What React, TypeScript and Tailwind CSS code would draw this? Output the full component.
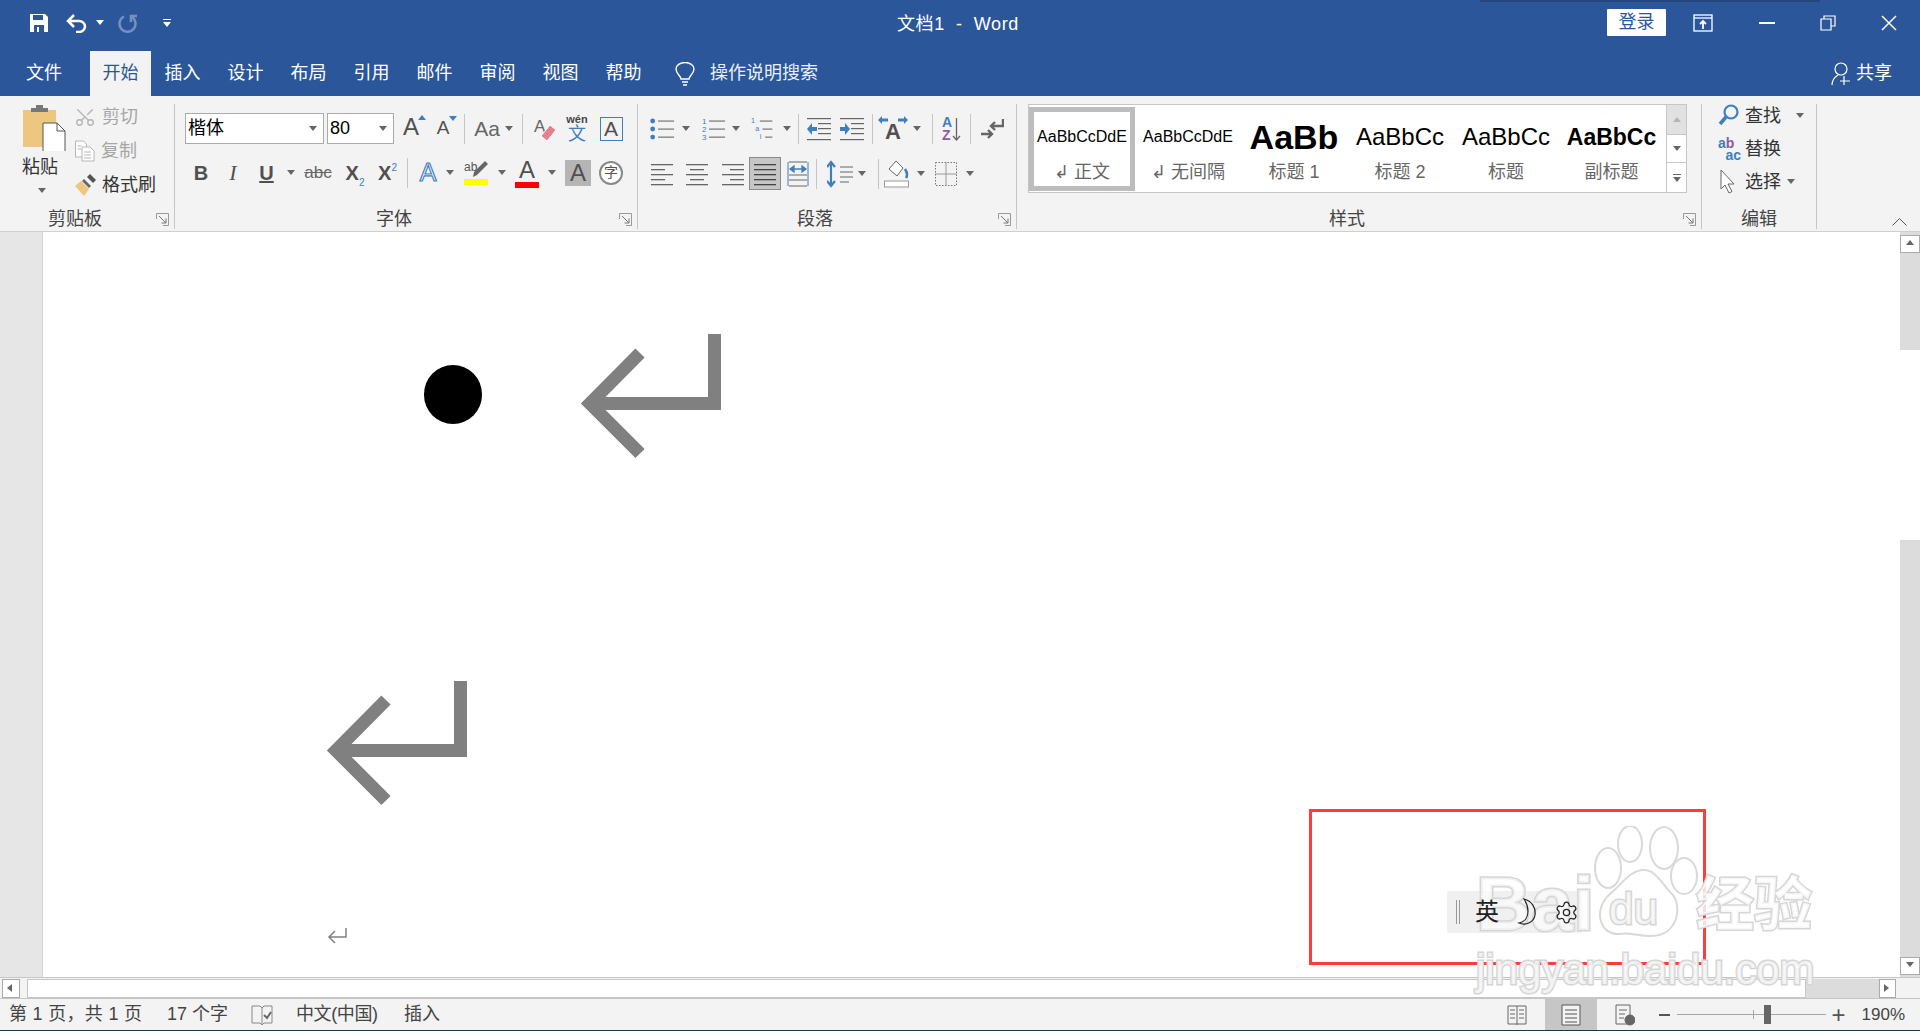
import { Scissors, Settings } from "lucide-react";
import type { ReactNode } from "react";

const Caret = ({ color = "#666" }: { color?: string }) => (
  <svg width="8" height="5" viewBox="0 0 8 5" className="shrink-0">
    <path d="M0 0h8L4 5z" fill={color} />
  </svg>
);

function Cell({ className = "", children }: { className?: string; children?: ReactNode }) {
  return <div className={`flex shrink-0 items-center justify-center ${className}`}>{children}</div>;
}

const Sep = ({ className = "" }: { className?: string }) => (
  <div className={`flex shrink-0 justify-center ${className}`}>
    <div className="h-[30px] w-px bg-[#c6c6c6]" />
  </div>
);

function Lines({ x = [0, 0, 0, 0, 0], w = [22, 14, 22, 14, 22], color = "#666" }: { x?: number[]; w?: number[]; color?: string }) {
  return (
    <svg width="24" height="24" viewBox="0 0 24 24">
      {[2, 7, 12, 17, 22].map((y, i) => (
        <rect key={y} x={1 + x[i]} y={y} width={w[i]} height="1.3" fill={color} />
      ))}
    </svg>
  );
}

function Launcher() {
  return (
    <svg width="13" height="13" viewBox="0 0 13 13" fill="none" stroke="#777">
      <path d="M.5 6V.5H12.5V12.5H7" stroke="#999" />
      <path d="M3 3l7 7M10 5.500V10H5.500" />
    </svg>
  );
}

function Group({ label, launcher = true, className, children }: { label: string; launcher?: boolean; className: string; children: ReactNode }) {
  return (
    <div className={`flex shrink-0 border-r border-[#c6c6c6] ${className}`}>
      <div className="flex min-w-0 flex-1 flex-col">
        <div className="h-[105px]">{children}</div>
        <div className="flex h-[20px] items-center">
          <div className="flex-1 text-center text-[18px] leading-[20px] text-[#444]">{label}</div>
          {launcher && (
            <div className="flex w-[24px] shrink-0 justify-center">
              <Launcher />
            </div>
          )}
        </div>
      </div>
    </div>
  );
}

function ClipboardGroup() {
  return (
    <div className="flex h-full pl-[22px]">
      <div className="flex w-[50px] shrink-0 flex-col">
        <svg width="44" height="48" viewBox="0 0 44 48" className="mt-[-1px]">
          <path d="M1 7h33v37H1z" fill="#edc67f" />
          <path d="M9 5h5V2h7v3h5v4H9z" fill="#777" />
          <path d="M21 20h14l8 8v22H21z" fill="#fff" stroke="#555" strokeWidth="1" />
          <path d="M35 20v8h8" fill="none" stroke="#555" />
        </svg>
        <div className="mt-[5px] text-[18px] leading-[22px] text-[#333]">粘贴</div>
        <div className="ml-[16px] mt-[10px]">
          <Caret />
        </div>
      </div>
      <div className="mt-[-4px] flex flex-col text-[18px] leading-[22px]">
        <div className="flex h-[34px] items-center gap-[6px] pl-[2px] text-[#a6a6a6]">
          <Scissors size={22} strokeWidth={1.5} color="#b5b5b5" className="-rotate-90" />
          <span>剪切</span>
        </div>
        <div className="flex h-[34px] items-center gap-[6px] pl-[2px] text-[#a6a6a6]">
          <svg width="21" height="22" viewBox="0 0 21 22" fill="#fff" stroke="#b5b5b5">
            <path d="M1.500 1h8l3 3v13h-11z" />
            <path d="M8 7h8l4 4v10H8z" />
            <path d="M10 12h7M10 15h7M10 18h7M3.500 6h4M3.500 9h4" fill="none" />
          </svg>
          <span>复制</span>
        </div>
        <div className="flex h-[34px] items-center gap-[6px] pl-[2px] text-[#333]">
          <svg width="22" height="22" viewBox="0 0 22 22">
            <path d="M13 3l3-3 6 6-3 3z" fill="#555" />
            <path d="M10 5l7 7-2 2-7-7z" fill="#666" />
            <path d="M7 7l8 8-5 7-9-10z" fill="#edc67f" />
          </svg>
          <span>格式刷</span>
        </div>
      </div>
    </div>
  );
}

function Combo({ className, text, textClass }: { className: string; text: string; textClass: string }) {
  return (
    <div className={`flex h-[31px] shrink-0 items-center justify-between border border-[#ababab] bg-white pl-[2px] pr-[6px] ${className}`}>
      <span className={`text-black ${textClass}`}>{text}</span>
      <Caret />
    </div>
  );
}

const BigA = ({ size, color = "#505050" }: { size: string; color?: string }) => (
  <span className={`font-['Liberation_Sans'] leading-none ${size}`} style={{ color }}>A</span>
);

function FontGroup() {
  return (
    <div className="flex flex-col pl-[10px] pt-[9px]">
      <div className="flex h-[31px] items-center">
        <Combo className="w-[139px]" text="楷体" textClass="text-[18px]" />
        <Combo className="ml-[3px] w-[67px]" text="80" textClass="text-[18px]" />
        <Cell className="w-[34px]">
          <div className="relative">
            <BigA size="text-[24px]" />
            <svg width="8" height="5" viewBox="0 0 8 5" className="absolute right-[-7px] top-[0px]"><path d="M4 0l4 5H0z" fill="#3f7fbf" /></svg>
          </div>
        </Cell>
        <Cell className="w-[30px]">
          <div className="relative">
            <BigA size="text-[19px]" />
            <svg width="8" height="5" viewBox="0 0 8 5" className="absolute right-[-8px] top-[-1px]"><path d="M0 0h8L4 5z" fill="#3f7fbf" /></svg>
          </div>
        </Cell>
        <Sep className="w-[12px]" />
        <Cell className="w-[34px] font-['Liberation_Sans'] text-[21px] text-[#666]">Aa</Cell>
        <Cell className="w-[10px]"><Caret /></Cell>
        <Sep className="w-[16px]" />
        <Cell className="w-[30px]">
          <div className="relative h-[26px] w-[22px]">
            <span className="absolute left-0 top-[-2px] font-['Liberation_Sans'] text-[17px] text-[#666]">A</span>
            <svg width="20" height="18" viewBox="0 0 20 18" className="absolute bottom-0 right-[-2px]">
              <path d="M12 1l6 5-9 11-6-5z" fill="#e87d8c" stroke="#fff" />
            </svg>
          </div>
        </Cell>
        <Cell className="w-[34px]">
          <div className="flex flex-col items-center leading-none">
            <span className="text-[11px] font-bold leading-[11px] text-[#444]">wén</span>
            <span className="text-[18px] leading-[18px] text-[#3f7fbf]">文</span>
          </div>
        </Cell>
        <Cell className="w-[34px]">
          <div className="flex h-[24px] w-[23px] items-center justify-center border border-[#3f7fbf]">
            <BigA size="text-[21px]" />
          </div>
        </Cell>
      </div>
      <div className="mt-[13px] flex h-[31px] items-center">
        <Cell className="w-[32px] font-['Liberation_Sans'] text-[20px] font-bold text-[#505050]">B</Cell>
        <Cell className="w-[32px] font-['Liberation_Serif'] text-[22px] italic text-[#505050]">I</Cell>
        <Cell className="w-[35px] font-['Liberation_Sans'] text-[20px] font-bold text-[#505050] underline">U</Cell>
        <Cell className="w-[14px]"><Caret /></Cell>
        <Cell className="w-[40px] font-['Liberation_Sans'] text-[17px] text-[#666] line-through">abc</Cell>
        <Cell className="w-[34px] items-end font-['Liberation_Sans'] text-[20px] font-bold text-[#505050]">
          X<span className="mb-[-2px] text-[10px] font-normal text-[#3f7fbf]">2</span>
        </Cell>
        <Cell className="w-[31px] font-['Liberation_Sans'] text-[20px] font-bold text-[#505050]">
          X<span className="mb-[10px] text-[10px] font-normal text-[#3f7fbf]">2</span>
        </Cell>
        <Sep className="w-[8px]" />
        <Cell className="w-[34px]">
          <span className="font-['Liberation_Sans'] text-[25px] leading-none text-white [-webkit-text-stroke:1.2px_#3f7fbf]">A</span>
        </Cell>
        <Cell className="w-[10px]"><Caret /></Cell>
        <Cell className="w-[42px]">
          <div className="flex flex-col items-center">
            <svg width="24" height="19" viewBox="0 0 24 19">
              <text x="0" y="11" fontSize="12" fill="#555">ab</text>
              <path d="M21 1l3 3-11 11-4 2 1-5z" fill="#666" />
            </svg>
            <div className="h-[6px] w-[24px] bg-[#ffff00]" />
          </div>
        </Cell>
        <Cell className="w-[10px]"><Caret /></Cell>
        <Cell className="w-[40px]">
          <div className="flex flex-col items-center">
            <BigA size="text-[24px]" />
            <div className="h-[6px] w-[24px] bg-[#ff0000]" />
          </div>
        </Cell>
        <Cell className="w-[10px]"><Caret /></Cell>
        <Cell className="w-[42px]">
          <div className="flex h-[26px] w-[26px] items-center justify-center bg-[#b5b5b5]">
            <BigA size="text-[24px]" />
          </div>
        </Cell>
        <Cell className="w-[24px]">
          <div className="flex h-[24px] w-[24px] shrink-0 items-center justify-center rounded-full border-2 border-[#888] bg-white text-[14px] text-[#555]">字</div>
        </Cell>
      </div>
    </div>
  );
}

function ListIcon({ kind }: { kind: "dot" | "num" | "multi" }) {
  const labels = kind === "num" ? ["1", "2", "3"] : ["1", "a", "i"];
  return (
    <svg width="25" height="24" viewBox="0 0 28 26">
      {[4, 13, 22].map((y, i) => (
        <g key={y}>
          {kind === "dot" && <circle cx="3" cy={y} r="2.700" fill="#3f7fbf" />}
          {kind === "num" && <text x="1" y={y + 3} fontSize="9" fill="#3f7fbf">{labels[i]}</text>}
          {kind === "multi" && <text x={1 + i * 5} y={y + 2} fontSize="8" fill="#3f7fbf">{labels[i]}</text>}
          <rect x={kind === "multi" ? 11 + i * 3 : 9} y={y - 0.5} width={kind === "multi" ? 14 - i * 3 : 18} height="1.200" fill="#666" />
        </g>
      ))}
    </svg>
  );
}

function IndentIcon({ flip }: { flip?: boolean }) {
  return (
    <svg width="26" height="24" viewBox="0 0 26 24">
      {[1, 22].map((y) => <rect key={y} x="1" y={y} width="24" height="1.200" fill="#666" />)}
      {[6, 11, 16].map((y) => <rect key={y} x="12" y={y} width="13" height="1.200" fill="#666" />)}
      <path d={flip ? "M1 10h5V6l5 6-5 6v-4H1z" : "M11 10H6V6l-5 6 5 6v-4h5z"} fill="#3f7fbf" />
    </svg>
  );
}

function ParagraphGroup() {
  return (
    <div className="flex flex-col pl-[9px] pt-[9px]">
      <div className="flex h-[31px] items-center">
        <Cell className="w-[30px]"><ListIcon kind="dot" /></Cell>
        <Cell className="w-[18px]"><Caret /></Cell>
        <Cell className="w-[36px]"><ListIcon kind="num" /></Cell>
        <Cell className="w-[10px]"><Caret /></Cell>
        <Cell className="w-[42px]"><ListIcon kind="multi" /></Cell>
        <Cell className="w-[8px]"><Caret /></Cell>
        <Sep className="w-[14px]" />
        <Cell className="w-[28px]"><IndentIcon /></Cell>
        <Cell className="w-[38px]"><IndentIcon flip /></Cell>
        <Sep className="w-[2px]" />
        <Cell className="w-[40px]">
          <div className="relative flex h-[26px] w-[30px] items-end justify-center">
            <svg width="30" height="9" viewBox="0 0 30 9" className="absolute left-0 top-0">
              <path d="M0 4l4-4v2.500h6v3H4V8zM30 4l-4-4v2.500h-6v3h6V8z" fill="#3f7fbf" />
            </svg>
            <span className="font-['Liberation_Sans'] text-[22px] font-bold leading-[20px] text-[#505050]">A</span>
          </div>
        </Cell>
        <Cell className="w-[8px]"><Caret /></Cell>
        <Sep className="w-[22px]" />
        <Cell className="w-[14px]">
          <div className="relative flex shrink-0 items-start pr-[6px] font-['Liberation_Sans'] text-[14px] font-bold leading-[13px]">
            <div className="flex flex-col">
              <span className="text-[#3f7fbf]">A</span>
              <span className="text-[#8c5ca8]">Z</span>
            </div>
            <svg width="9" height="26" viewBox="0 0 9 26" className="absolute right-[-3px] top-0" fill="none" stroke="#666" strokeWidth="1.300">
              <path d="M4.500 2v22M1 20l3.500 4 3.500-4" />
            </svg>
          </div>
        </Cell>
        <Sep className="w-[26px]" />
        <Cell className="w-[18px]">
          <svg width="24" height="22" viewBox="0 0 24 22" className="shrink-0" fill="none" stroke="#666" strokeWidth="2.400">
            <path d="M23 1v7H12M15 4l-4 4 4 4M1 16h10M8 12l4 4-4 4" />
          </svg>
        </Cell>
      </div>
      <div className="mt-[13px] flex h-[33px] items-center">
        <Cell className="w-[30px]"><Lines /></Cell>
        <Cell className="w-[40px]"><Lines x={[0, 4, 0, 4, 0]} /></Cell>
        <Cell className="w-[32px]"><Lines x={[0, 8, 0, 8, 0]} /></Cell>
        <Cell className="h-[33px] w-[32px] border border-[#8a8a8a] bg-[#c6c6c6]"><Lines w={[22, 22, 22, 22, 22]} color="#444" /></Cell>
        <Cell className="w-[34px]">
          <svg width="24" height="26" viewBox="0 0 24 26" fill="none">
            <path d="M2 1v24M22 1v24" stroke="#3f7fbf" />
            <path d="M4 8h16M4 8l4-3v6zM20 8l-4-3v6z" stroke="#3f7fbf" strokeWidth="1.300" fill="#3f7fbf" />
            <path d="M3 1h18M3 14h18M3 19h18M3 25h18" stroke="#666" />
          </svg>
        </Cell>
        <Sep className="w-[2px]" />
        <Cell className="w-[40px] pl-[8px]">
          <svg width="28" height="28" viewBox="0 0 28 28" fill="none" className="shrink-0">
            <path d="M4 2v24M0 7l4-5 4 5M0 21l4 5 4-5" stroke="#3f7fbf" strokeWidth="2.200" />
            <path d="M13 7h13M13 12h13M13 17h13M13 22h9" stroke="#666" />
          </svg>
        </Cell>
        <Cell className="w-[10px]"><Caret /></Cell>
        <Sep className="w-[22px]" />
        <Cell className="w-[16px]">
          <svg width="26" height="28" viewBox="0 0 26 28" fill="none" className="shrink-0">
            <path d="M12 1l7 7-6 8-8-7z" fill="#fff" stroke="#666" />
            <path d="M21 9c2 3 3 6 1 9" stroke="#3f7fbf" strokeWidth="2.500" />
            <rect x=".5" y="21" width="24" height="6" fill="#fff" stroke="#999" />
          </svg>
        </Cell>
        <Cell className="w-[32px]"><Caret /></Cell>
        <Cell className="w-[18px]">
          <svg width="22" height="24" viewBox="0 0 22 24" fill="none" stroke="#777" strokeDasharray="1.500 1.500" className="shrink-0">
            <rect x=".5" y=".5" width="21" height="23" />
            <path d="M11 0v24M0 12h22" strokeDasharray="none" stroke="#999" />
          </svg>
        </Cell>
        <Cell className="w-[30px]"><Caret /></Cell>
      </div>
    </div>
  );
}

function StyleItem({ sample, label, sampleClass, active, last }: { sample: string; label: string; sampleClass: string; active?: boolean; last?: boolean }) {
  return (
    <div className={`mt-[2px] flex h-[84px] shrink-0 flex-col items-center overflow-hidden border-[5px] ${last ? "w-[105px]" : "w-[106px]"} ${active ? "border-[#bdbdbd] bg-white" : "border-transparent"}`}>
      <div className="flex h-[50px] w-full items-center justify-center overflow-hidden whitespace-nowrap">
        <span className={`text-black ${sampleClass}`}>{sample}</span>
      </div>
      <div className="mt-[-1px] text-[18px] leading-[22px] text-[#666]">{label}</div>
    </div>
  );
}

function StylesGroup() {
  const regular = "font-['Liberation_Sans'] text-[24px]";
  return (
    <div className="pl-[11px]">
      <div className="flex h-[89px] w-[659px] border border-[#c6c6c6] bg-white">
        <div className="flex w-[637px] overflow-hidden">
          <StyleItem active sample="AaBbCcDdE" label="↲ 正文" sampleClass="font-['Liberation_Sans'] text-[16px]" />
          <StyleItem sample="AaBbCcDdE" label="↲ 无间隔" sampleClass="font-['Liberation_Sans'] text-[16px]" />
          <StyleItem sample="AaBb" label="标题 1" sampleClass="font-['Liberation_Sans'] text-[34px] font-bold" />
          <StyleItem sample="AaBbCc" label="标题 2" sampleClass={regular} />
          <StyleItem sample="AaBbCc" label="标题" sampleClass={regular} />
          <StyleItem last sample="AaBbCc" label="副标题" sampleClass="font-['Liberation_Sans'] text-[23px] font-bold" />
        </div>
        <div className="flex w-[20px] flex-col border-l border-[#c6c6c6]">
          <div className="flex h-[30px] items-center justify-center border-b border-[#c6c6c6] bg-[#e1e1e1]">
            <svg width="8" height="5" viewBox="0 0 8 5"><path d="M4 0l4 5H0z" fill="#b5b5b5" /></svg>
          </div>
          <div className="flex h-[28px] items-center justify-center border-b border-[#c6c6c6]"><Caret /></div>
          <div className="flex flex-1 flex-col items-center justify-center gap-[2px]">
            <div className="h-px w-[8px] bg-[#666]" />
            <Caret />
          </div>
        </div>
      </div>
    </div>
  );
}

function EditGroup() {
  return (
    <div className="mt-[-5px] flex flex-col pl-[16px] text-[18px] leading-[22px] text-[#333]">
      <div className="flex h-[33px] items-center gap-[6px]">
        <svg width="21" height="23" viewBox="0 0 21 23" fill="none" stroke="#3f7fbf" className="shrink-0">
          <circle cx="13" cy="8" r="6.500" strokeWidth="2.200" />
          <path d="M8 13l-6 7" strokeWidth="3.500" />
        </svg>
        <span>查找</span>
        <div className="ml-[9px]"><Caret /></div>
      </div>
      <div className="flex h-[33px] items-center gap-[4px]">
        <div className="flex w-[23px] shrink-0 flex-col font-['Liberation_Sans'] text-[14px] font-bold leading-[12px]">
          <span><span className="text-[#3f7fbf]">a</span><span className="text-[#8c5ca8]">b</span></span>
          <span className="text-right text-[#3f7fbf]">ac</span>
        </div>
        <span>替换</span>
      </div>
      <div className="flex h-[33px] items-center gap-[6px]">
        <svg width="21" height="26" viewBox="0 0 21 26" fill="#fff" stroke="#666" className="shrink-0">
          <path d="M3 1v19l4-4 4 8 3-1.500-4-7.500h6z" />
        </svg>
        <span>选择</span>
        <Caret />
      </div>
    </div>
  );
}

function TitleBar() {
  return (
    <div className="flex h-[51px] items-center pb-[6px] text-white">
      <Cell className="ml-[29px] w-[20px]">
        <svg width="20" height="20" viewBox="0 0 20 20">
          <path d="M1 1h15l3 3v15H1z" fill="#fff" />
          <path d="M4 2h10v5H4z" fill="#2b579a" />
          <path d="M5 12h10v7H5z" fill="#2b579a" />
          <path d="M8 14h2v5H8z" fill="#fff" />
        </svg>
      </Cell>
      <Cell className="ml-[17px] w-[22px]">
        <svg width="22" height="20" viewBox="0 0 22 20" fill="none" stroke="#fff" strokeWidth="2.500">
          <path d="M8 2L2 8l6 6M2 8h11a6 5.500 0 0 1 0 11h-3" />
        </svg>
      </Cell>
      <Cell className="ml-[8px] w-[8px]"><Caret color="#fff" /></Cell>
      <Cell className="ml-[13px] w-[20px]">
        <svg width="20" height="20" viewBox="0 0 20 20" fill="none" stroke="#7392c0" strokeWidth="2.500">
          <path d="M7 3.500A8 8 0 1 0 14 3.500M14 9V3h6" />
        </svg>
      </Cell>
      <Cell className="ml-[26px] w-[8px]">
        <svg width="8" height="8" viewBox="0 0 8 8"><path d="M0 0h8v1H0zM0 3h8L4 8z" fill="#fff" /></svg>
      </Cell>
      <div className="ml-[726px] mt-[3px] w-[132px] whitespace-pre text-[18px] tracking-[0.6px]">文档1  -  Word</div>
      <div className="flex-1" />
      <div className="flex h-[27px] w-[59px] shrink-0 items-center justify-center rounded-[1px] bg-white text-[18px] text-[#2b579a]">登录</div>
      <Cell className="ml-[27px] w-[20px]">
        <svg width="20" height="18" viewBox="0 0 20 18" fill="none" stroke="#fff" strokeWidth="1.300">
          <rect x="1" y="1" width="18" height="16" />
          <path d="M1 4h18" />
          <path d="M10 15V7M7 10l3-3 3 3" strokeWidth="1.800" />
        </svg>
      </Cell>
      <Cell className="ml-[46px] w-[16px]"><div className="h-[2px] w-[16px] bg-white" /></Cell>
      <Cell className="ml-[45px] w-[16px]">
        <svg width="16" height="16" viewBox="0 0 16 16" fill="none" stroke="#fff" strokeWidth="1.200">
          <path d="M1 4h10v11H1zM4 4V1h11v10h-4" />
        </svg>
      </Cell>
      <Cell className="ml-[45px] mr-[23px] w-[16px]">
        <svg width="16" height="16" viewBox="0 0 16 16" stroke="#fff" strokeWidth="1.500"><path d="M1 1l14 14M15 1L1 15" /></svg>
      </Cell>
    </div>
  );
}

function TabBar() {
  const tabs = ["插入", "设计", "布局", "引用", "邮件", "审阅", "视图", "帮助"];
  return (
    <div className="flex h-[45px] items-stretch text-[18px] text-white">
      <div className="ml-[13px] flex w-[62px] items-center justify-center">文件</div>
      <div className="ml-[15px] flex w-[61px] items-center justify-center bg-[#f3f3f3] text-[#2b579a]">开始</div>
      {tabs.map((t) => (
        <div key={t} className="flex w-[63px] items-center justify-center">{t}</div>
      ))}
      <div className="ml-[20px] flex items-center">
        <svg width="20" height="24" viewBox="0 0 20 24" fill="none" stroke="#fff" strokeWidth="1.400">
          <path d="M6 17c0-3-5-5-5-10a9 6.500 0 0 1 18 0c0 5-5 7-5 10z" />
          <path d="M7 20h6M8 23h4" />
        </svg>
        <span className="ml-[15px] text-[#eaf0f8]">操作说明搜索</span>
      </div>
      <div className="flex-1" />
      <div className="mr-[28px] flex items-center gap-[3px]">
        <svg width="22" height="24" viewBox="0 0 22 24" fill="none" stroke="#fff" strokeWidth="1.200">
          <circle cx="10" cy="7" r="6" />
          <path d="M1 23c0-5 3-8 6-10M13 14v9M9 19h10" />
        </svg>
        <span>共享</span>
      </div>
    </div>
  );
}

function ReturnArrow() {
  return (
    <svg width="142" height="127" viewBox="0 0 142 127" fill="none" stroke="#808080" strokeWidth="13" className="block">
      <path d="M134.500 1v69.500H10" />
      <path d="M60 20L10 70.500l50 50" />
    </svg>
  );
}

function Watermark() {
  const outline = "[paint-order:stroke_fill] [-webkit-text-stroke:3px_#d6d6d6]";
  return (
    <div className="pointer-events-none absolute left-[1476px] top-[826px] h-[170px] w-[345px] font-['Liberation_Sans','Noto_Sans_CJK_SC']">
      <svg width="140" height="112" viewBox="0 0 140 112" className="absolute left-[112px] top-0" fill="#ffffff" fillOpacity="0.75" stroke="#d9d9d9" strokeWidth="2">
        <ellipse cx="42" cy="18" rx="12" ry="18" />
        <ellipse cx="76" cy="22" rx="14" ry="21" />
        <ellipse cx="20" cy="42" rx="13" ry="20" />
        <ellipse cx="96" cy="50" rx="13" ry="18" />
        <path d="M56 44c12 0 18 14 28 24 10 10 8 42-22 42-14 0-20-4-30-2C12 110 4 84 22 68c12-10 20-24 34-24z" />
      </svg>
      <span className={`absolute left-0 top-[38px] text-[76px] font-bold leading-[80px] text-white/60 ${outline}`}>Bai</span>
      <span className={`absolute left-[133px] top-[60px] text-[44px] leading-[46px] text-white/70 ${outline}`}>du</span>
      <span className={`absolute left-[220px] top-[46px] text-[58px] font-bold leading-[66px] text-white/80 ${outline}`}>经验</span>
      <span className={`absolute left-0 top-[120px] text-[42px] leading-[48px] text-white/70 ${outline}`}>jingyan.baidu.com</span>
    </div>
  );
}

function ScrollButton({ dir, className = "" }: { dir: "up" | "down" | "left" | "right"; className?: string }) {
  const paths = { up: "M4 0l4 5H0z", down: "M0 0h8L4 5z", left: "M5 0v8L0 4z", right: "M0 0v8l5-4z" };
  return (
    <div className={`flex shrink-0 items-center justify-center border border-[#ababab] bg-white ${className}`}>
      <svg width="8" height="8" viewBox="0 0 8 8"><path d={paths[dir]} fill="#666" /></svg>
    </div>
  );
}

function StatusBar() {
  return (
    <div className="flex h-[32px] shrink-0 items-center border-t border-[#c6c6c6] bg-[#f3f3f3] text-[18px] text-[#444]">
      <span className="ml-[9px] w-[158px] tracking-[0.3px]">第 1 页，共 1 页</span>
      <span className="w-[84px]">17 个字</span>
      <svg width="22" height="22" viewBox="0 0 22 22" fill="none" stroke="#888" className="shrink-0">
        <path d="M1 2h8l2 2 2-2h8v17h-8l-2 2-2-2H1zM11 4v17" />
        <path d="M13 11l3 3 4-6" stroke="#666" strokeWidth="2" />
      </svg>
      <span className="ml-[23px] w-[108px] tracking-[-0.4px]">中文(中国)</span>
      <span>插入</span>
      <div className="flex-1" />
      <svg width="20" height="22" viewBox="0 0 20 22" fill="none" stroke="#666" className="shrink-0">
        <path d="M1 2h18v18H1zM10 2v19M3 6h5M3 10h5M3 14h5M12 6h5M12 10h5M12 14h5" />
      </svg>
      <div className="ml-[18px] flex h-[31px] w-[52px] shrink-0 items-center justify-center bg-[#c6c6c6]">
        <svg width="20" height="22" viewBox="0 0 20 22" fill="#f3f3f3" stroke="#555">
          <path d="M1 1h18v20H1zM4 6h12M4 10h12M4 14h12M4 18h12" />
        </svg>
      </div>
      <svg width="20" height="22" viewBox="0 0 20 22" fill="none" stroke="#666" className="ml-[18px] shrink-0">
        <path d="M1 1h14v19H1zM4 6h8M4 10h6M4 14h5" />
        <circle cx="15" cy="16" r="5" fill="#666" />
      </svg>
      <div className="ml-[24px] h-[2px] w-[11px] shrink-0 bg-[#555]" />
      <div className="relative ml-[7px] h-px w-[149px] shrink-0 bg-[#a6a6a6]">
        <div className="absolute left-[76px] top-[-4px] h-[9px] w-px bg-[#a6a6a6]" />
        <div className="absolute left-[87px] top-[-9px] h-[19px] w-[7px] bg-[#666]" />
      </div>
      <div className="ml-[6px] text-[24px] font-light leading-none text-[#555]">+</div>
      <span className="ml-[16px] mr-[15px] text-[17px]">190%</span>
    </div>
  );
}

export default function App() {
  return (
    <div className="relative flex h-[1031px] w-[1920px] flex-col overflow-hidden bg-white font-['Liberation_Sans','Noto_Sans_CJK_SC',sans-serif]">
      <div className="h-[96px] shrink-0 bg-[#2b579a]">
        <TitleBar />
        <TabBar />
      </div>
      <div className="flex h-[136px] shrink-0 border-b border-[#d0d0d0] bg-[#f3f3f3] pt-[8px]">
        <Group label="剪贴板" className="mb-[2px] w-[175px]"><ClipboardGroup /></Group>
        <Group label="字体" className="mb-[2px] w-[463px]"><FontGroup /></Group>
        <Group label="段落" className="mb-[2px] w-[379px]"><ParagraphGroup /></Group>
        <Group label="样式" className="mb-[2px] w-[685px]"><StylesGroup /></Group>
        <Group label="编辑" launcher={false} className="mb-[2px] w-[115px]"><EditGroup /></Group>
        <div className="flex flex-1 items-end justify-end pb-[5px] pr-[13px]">
          <svg width="15" height="8" viewBox="0 0 15 8" fill="none" stroke="#555"><path d="M.5 7.500l7-7 7 7" /></svg>
        </div>
      </div>
      <div className="flex min-h-0 flex-1">
        <div className="w-[43px] shrink-0 border-r border-[#d4d4d4] bg-[#e6e6e6]" />
        <div className="flex-1 pl-[283px] pt-[101px]">
          <div className="flex items-start pl-[98px]">
            <div className="mt-[32px] h-[59px] w-[58px] rounded-full bg-black" />
            <div className="ml-[98px]"><ReturnArrow /></div>
          </div>
          <div className="mt-[220px]"><ReturnArrow /></div>
          <svg width="20" height="18" viewBox="0 0 20 18" fill="none" stroke="#808080" strokeWidth="1.500" className="ml-[1px] mt-[120px]">
            <path d="M19 1v9H2M8 4l-6 6 6 6" />
          </svg>
        </div>
        <div className="flex w-[20px] shrink-0 flex-col bg-[#dcdcdc]">
          <ScrollButton dir="up" className="mt-[3px] h-[18px]" />
          <div className="mt-[97px] h-[190px] shrink-0 bg-white" />
          <div className="flex-1" />
          <ScrollButton dir="down" className="mb-[2px] h-[18px]" />
        </div>
      </div>
      <div className="flex h-[21px] shrink-0 items-center border-t border-[#c6c6c6] bg-[#f3f3f3]">
        <ScrollButton dir="left" className="ml-[2px] h-[19px] w-[18px]" />
        <div className="ml-[7px] h-[19px] w-[1779px] shrink-0 border border-[#c6c6c6] bg-white" />
        <div className="h-[19px] w-[73px] shrink-0 bg-[#dcdcdc]" />
        <ScrollButton dir="right" className="h-[19px] w-[17px]" />
      </div>
      <StatusBar />
      <div className="h-[1px] shrink-0 bg-[#0f3a55]" />

      <div className="absolute left-[1480px] top-0 h-[2px] w-[340px] bg-[#22467d]" />
      <div className="absolute left-[1309px] top-[809px] h-[156px] w-[397px] border-[3px] border-[#ff3b3b]" />
      <div className="absolute left-[1447px] top-[891px] h-[42px] w-[135px] bg-[#f0f0f0]" />
      <Watermark />
      <div className="absolute left-[1447px] top-[891px] flex h-[42px] w-[135px] items-center">
        <div className="ml-[9px] h-[24px] w-[4px] shrink-0 border-x border-[#999]" />
        <span className="ml-[15px] text-[24px] leading-none text-[#222]">英</span>
        <svg width="24" height="30" viewBox="0 0 24 30" fill="none" stroke="#222" strokeWidth="1.200" className="ml-[16px] shrink-0">
          <path d="M9 2c8 2 12 9 11 16-1 7-9 11-16 8 6-1 9-6 9-12 0-5-2-9-4-12z" />
        </svg>
        <Settings size={25} strokeWidth={1.200} color="#222" className="ml-[15px] shrink-0" />
      </div>
    </div>
  );
}
